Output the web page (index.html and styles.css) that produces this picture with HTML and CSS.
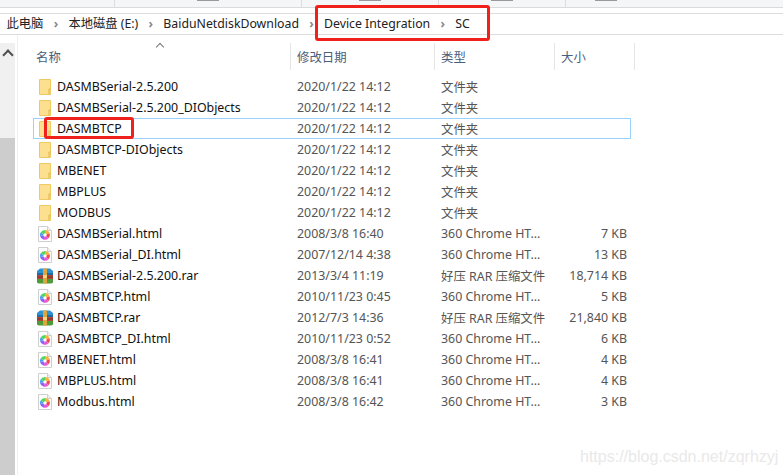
FILE: index.html
```html
<!DOCTYPE html>
<html lang="zh">
<head>
<meta charset="utf-8">
<title>SC</title>
<link rel="stylesheet" href="styles.css">
</head>
<body>
<svg class="defs" width="0" height="0" aria-hidden="true">
  <defs>
    <symbol id="folder" viewBox="0 0 16 16">
      <path d="M2.500.5h11v15h-11z" fill="#fce08f" stroke="#eecb62"/>
      <path d="M12 15.500V10h1.500" fill="none" stroke="#dcb650"/>
    </symbol>
    <symbol id="html" viewBox="0 0 16 16">
      <path d="M1.500.5h9l4 4v11h-13z" fill="#fdfdfd" stroke="#cfcfcf"/>
      <path d="M10.500.5v4h4" fill="#eee" stroke="#cfcfcf"/>
      <g transform="translate(.8 .8) scale(.9)">
        <path d="M8 9V3.500a5.500 5.500 0 0 1 5.200 3.800z" fill="#f9b13f"/>
        <path d="M8 9l5.200-1.700a5.500 5.500 0 0 1-1.300 5.500z" fill="#f4474d"/>
        <path d="M8 9l3.900 3.800a5.500 5.500 0 0 1-5.400 1.500z" fill="#ec55d8"/>
        <path d="M8 9l-1.500 5.300a5.500 5.500 0 0 1-4-4z" fill="#8a62f4"/>
        <path d="M8 9l-5.500 1.300a5.500 5.500 0 0 1 .6-3.900z" fill="#46a0f2"/>
        <path d="M8 9 3.100 6.400A5.500 5.500 0 0 1 8 3.500z" fill="#4fd65e"/>
        <circle cx="8" cy="9" r="1.800" fill="#fff"/>
      </g>
    </symbol>
    <symbol id="rar" viewBox="0 0 16 16">
      <path d="M0 3 3 .5h10L16 3v2H0z" fill="#2d92cf"/>
      <path d="M0 5h16v2H0z" fill="#1b6ea8"/>
      <path d="M0 7h16v4H0z" fill="#b3483a"/>
      <path d="M0 11h16v3.500l-1.500 1h-13L0 14.500z" fill="#4c9c38"/>
      <path d="M6 .5h4v15H6z" fill="#dba63f"/>
      <path d="M6 7h4v3H6z" fill="#f3d684"/>
      <path d="M0 9h6M10 9h6" stroke="#7e2f25"/>
    </symbol>
  </defs>
</svg>
<div class="window">
  <div class="ribbon">
    <div class="ribbon-tab ribbon-a"></div>
    <div class="ribbon-tab ribbon-b"><span class="fleck"></span></div>
    <div class="ribbon-tab ribbon-c"><span class="fleck"></span></div>
    <div class="ribbon-tab ribbon-d"><span class="fleck"></span></div>
    <div class="ribbon-tab ribbon-e"><span class="fleck"></span></div>
  </div>
  <div class="address">
    <span>此电脑</span><span class="sep">›</span><span>本地磁盘 (E:)</span><span class="sep">›</span><span>BaiduNetdiskDownload</span><span class="sep">›</span><span>Device Integration</span><span class="sep">›</span><span>SC</span>
  </div>
  <div class="main">
    <div class="scrollbar">
      <div class="scroll-arrow"></div>
      <div class="scroll-track"></div>
      <div class="scroll-thumb"></div>
    </div>
    <div class="files">
      <div class="sort-caret"></div>
      <div class="header">
        <div class="col-name hcell">名称</div>
        <div class="col-date hcell">修改日期</div>
        <div class="col-type hcell">类型</div>
        <div class="col-size hcell">大小</div>
      </div>
      <div class="rows">
        <div class="row"><svg class="icon"><use href="#folder"/></svg><div class="name">DASMBSerial-2.5.200</div><div class="date">2020/1/22 14:12</div><div class="type">文件夹</div><div class="size"></div></div>
        <div class="row"><svg class="icon"><use href="#folder"/></svg><div class="name">DASMBSerial-2.5.200_DIObjects</div><div class="date">2020/1/22 14:12</div><div class="type">文件夹</div><div class="size"></div></div>
        <div class="row focused"><svg class="icon"><use href="#folder"/></svg><div class="name">DASMBTCP</div><div class="date">2020/1/22 14:12</div><div class="type">文件夹</div><div class="size"></div></div>
        <div class="row"><svg class="icon"><use href="#folder"/></svg><div class="name">DASMBTCP-DIObjects</div><div class="date">2020/1/22 14:12</div><div class="type">文件夹</div><div class="size"></div></div>
        <div class="row"><svg class="icon"><use href="#folder"/></svg><div class="name">MBENET</div><div class="date">2020/1/22 14:12</div><div class="type">文件夹</div><div class="size"></div></div>
        <div class="row"><svg class="icon"><use href="#folder"/></svg><div class="name">MBPLUS</div><div class="date">2020/1/22 14:12</div><div class="type">文件夹</div><div class="size"></div></div>
        <div class="row"><svg class="icon"><use href="#folder"/></svg><div class="name">MODBUS</div><div class="date">2020/1/22 14:12</div><div class="type">文件夹</div><div class="size"></div></div>
        <div class="row"><svg class="icon"><use href="#html"/></svg><div class="name">DASMBSerial.html</div><div class="date">2008/3/8 16:40</div><div class="type">360 Chrome HT...</div><div class="size">7 KB</div></div>
        <div class="row"><svg class="icon"><use href="#html"/></svg><div class="name">DASMBSerial_DI.html</div><div class="date">2007/12/14 4:38</div><div class="type">360 Chrome HT...</div><div class="size">13 KB</div></div>
        <div class="row"><svg class="icon"><use href="#rar"/></svg><div class="name">DASMBSerial-2.5.200.rar</div><div class="date">2013/3/4 11:19</div><div class="type">好压 RAR 压缩文件</div><div class="size">18,714 KB</div></div>
        <div class="row"><svg class="icon"><use href="#html"/></svg><div class="name">DASMBTCP.html</div><div class="date">2010/11/23 0:45</div><div class="type">360 Chrome HT...</div><div class="size">5 KB</div></div>
        <div class="row"><svg class="icon"><use href="#rar"/></svg><div class="name">DASMBTCP.rar</div><div class="date">2012/7/3 14:36</div><div class="type">好压 RAR 压缩文件</div><div class="size">21,840 KB</div></div>
        <div class="row"><svg class="icon"><use href="#html"/></svg><div class="name">DASMBTCP_DI.html</div><div class="date">2010/11/23 0:52</div><div class="type">360 Chrome HT...</div><div class="size">6 KB</div></div>
        <div class="row"><svg class="icon"><use href="#html"/></svg><div class="name">MBENET.html</div><div class="date">2008/3/8 16:41</div><div class="type">360 Chrome HT...</div><div class="size">4 KB</div></div>
        <div class="row"><svg class="icon"><use href="#html"/></svg><div class="name">MBPLUS.html</div><div class="date">2008/3/8 16:41</div><div class="type">360 Chrome HT...</div><div class="size">4 KB</div></div>
        <div class="row"><svg class="icon"><use href="#html"/></svg><div class="name">Modbus.html</div><div class="date">2008/3/8 16:42</div><div class="type">360 Chrome HT...</div><div class="size">3 KB</div></div>
      </div>
    </div>
  </div>
  <div class="mark mark-path"></div>
  <div class="mark mark-folder"></div>
  <div class="watermark">https://blog.csdn.net/zqrhzyj</div>
</div>
</body>
</html>
```
FILE: styles.css
```css
* { box-sizing: border-box; }
html, body { margin: 0; padding: 0; background: #fff; }
body { font-family: "Noto Sans", "Noto Sans CJK SC", sans-serif; font-size: 12.4px; color: #1a1a1a; }
.defs { position: absolute; }
.window { position: relative; width: 783px; height: 475px; overflow: hidden; display: flex; flex-direction: column; }

.ribbon { height: 8px; display: flex; background: #f5f6f7; border-bottom: 1px solid #dadbdc; flex-shrink: 0; }
.ribbon-tab { height: 7px; border-right: 1px solid #dcdcdc; display: flex; justify-content: center; }
.ribbon-a { width: 115px; }
.ribbon-b { width: 187px; }
.ribbon-c { width: 137px; }
.ribbon-d { width: 127px; }
.ribbon-e { width: 80px; border-right: 0; }
.fleck { width: 22px; height: 1px; background: #9a9a9a; }

.address { margin-top: 5px; height: 22px; flex-shrink: 0; border-top: 1px solid #dcdcdc; border-bottom: 1px solid #dcdcdc; display: flex; align-items: center; padding: 0 0 2px 6.5px; font-size: 12.3px; color: #222; white-space: nowrap; }
.sep { width: 25px; text-align: center; color: #888; font-weight: 700; }

.main { flex: 1; display: flex; min-height: 0; }
.scrollbar { width: 15px; margin-top: 8px; background: #f0f0f0; display: flex; flex-direction: column; flex-shrink: 0; }
.scroll-arrow { height: 22px; position: relative; }
.scroll-arrow::before { content: ""; position: absolute; left: 4px; top: 8px; width: 6px; height: 6px; border-left: 2px solid #505050; border-top: 2px solid #505050; transform: rotate(45deg); }
.scroll-track { height: 73px; }
.scroll-thumb { flex: 1; background: #cdcdcd; }

.files { flex: 1; position: relative; margin-left: 2px; border-left: 1px solid #f0f0f0; padding: 8px 0 0 15px; }
.sort-caret { position: absolute; left: 139px; top: 9px; width: 6px; height: 6px; border-left: 1px solid #777; border-top: 1px solid #777; transform: rotate(45deg); }
.header { display: flex; height: 27px; color: #4c607a; }
.hcell { display: flex; align-items: center; border-right: 1px solid #e5e5e5; }
.col-name { width: 258px; padding-left: 3px; }
.col-date { width: 144px; padding-left: 6px; }
.col-type { width: 120px; padding-left: 6px; }
.col-size { width: 80px; padding-left: 6px; }

.rows { margin-top: 6px; }
.row { display: flex; align-items: center; height: 21px; width: 598px; border: 1px solid transparent; white-space: nowrap; }
.row.focused { border-color: #99d1ff; }
.icon { width: 16px; height: 16px; margin-left: 3px; flex-shrink: 0; }
.name { width: 244px; padding-left: 4px; color: #111; }
.date { width: 144px; color: #555; }
.type { width: 116px; color: #555; }
.size { width: 70px; text-align: right; color: #555; }

.mark { position: absolute; border: 3px solid #f0201a; border-radius: 3px; }
.mark-path { left: 315px; top: 5px; width: 175px; height: 36px; }
.mark-folder { left: 44px; top: 117px; width: 90px; height: 22px; }
.watermark { position: absolute; left: 580px; top: 448px; font-family: "Liberation Sans", sans-serif; font-size: 16px; color: #e9e9e9; white-space: nowrap; }
```
